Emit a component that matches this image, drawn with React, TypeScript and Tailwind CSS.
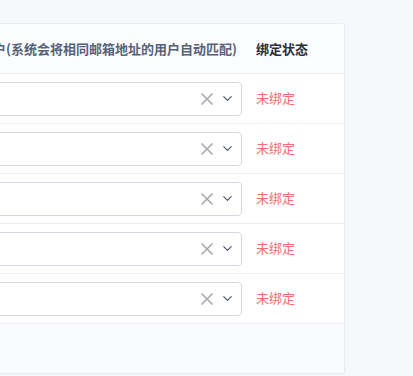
import { X, ChevronDown } from "lucide-react";

const ROWS = [0, 1, 2, 3, 4];

function UserSelect() {
  return (
    <div className="flex h-[34px] w-full items-center rounded-[4px] border border-[#d4d8e2] bg-white pr-[6px]">
      <div className="flex-1" />
      <X size={20} strokeWidth={2.1} className="text-[#a8abb2]" />
      <ChevronDown size={15} strokeWidth={1.8} className="ml-[3px] text-[#4b5162]" />
    </div>
  );
}

export default function App() {
  return (
    <div
      className="min-h-[376px] w-[413px] overflow-hidden bg-[#f7f8fa] pt-[23px]"
      style={{ fontFamily: '"Noto Sans CJK SC", "Noto Sans", sans-serif' }}
    >
      <div className="ml-[-64px] w-[409px] overflow-hidden rounded-[3px] border border-[#e9ecf1] bg-white shadow-[0_1px_2px_rgba(0,0,0,0.03)]">
        <div className="flex h-[50px] items-center border-b border-[#ebeef3] bg-[#fbfcfd] text-[13px] font-bold">
          <div className="flex-1 pl-[17px] text-[#55627a] whitespace-nowrap">
            绑定用户(系统会将相同邮箱地址的用户自动匹配)
          </div>
          <div className="w-[98px] pl-[10px] text-[#2b2f38]">绑定状态</div>
        </div>
        {ROWS.map((r) => (
          <div key={r} className="flex h-[50px] items-center border-b border-[#ebeef3]">
            <div className="flex-1 pl-[10px] pr-[4px]">
              <UserSelect />
            </div>
            <div className="w-[98px] pl-[10px] pb-[1px] text-[13px] text-[#f56c6c]">未绑定</div>
          </div>
        ))}
        <div className="h-[49px] bg-[#fafbfd]" />
      </div>
    </div>
  );
}
